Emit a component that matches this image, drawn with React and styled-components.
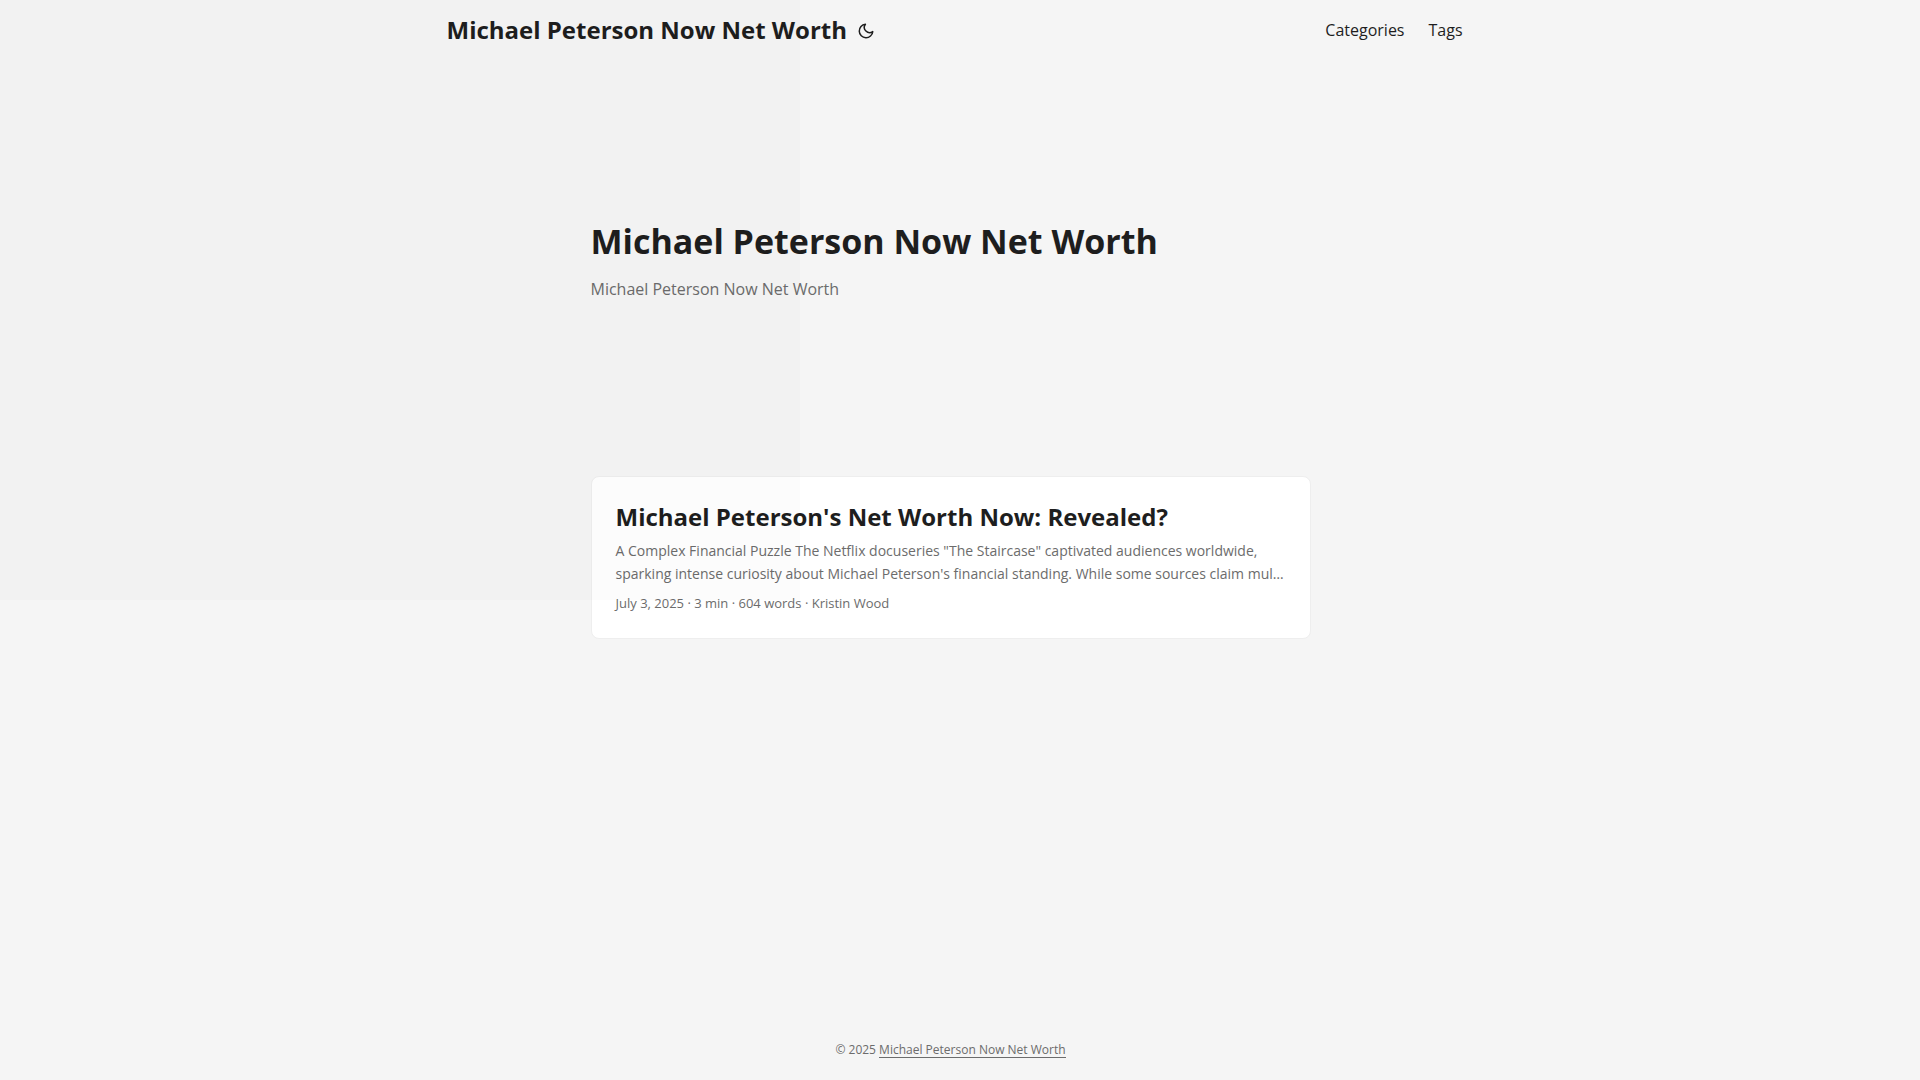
import React from 'react'
import styled, { createGlobalStyle } from 'styled-components'
import { FiMoon } from 'react-icons/fi'

const siteTitle = 'Michael Peterson Now Net Worth'

const menuLinks = [
  { label: 'Categories', url: '#categories' },
  { label: 'Tags', url: '#tags' },
]

const posts = [
  {
    title: "Michael Peterson's Net Worth Now: Revealed?",
    url: '#michael-peterson',
    summary:
      'A Complex Financial Puzzle The Netflix docuseries "The Staircase" captivated audiences worldwide, sparking intense curiosity about Michael Peterson\'s financial standing. While some sources claim mul…',
    meta: 'July 3, 2025 · 3 min · 604 words · Kristin Wood',
  },
]

const GlobalStyle = createGlobalStyle`
  *, *::before, *::after {
    box-sizing: border-box;
  }

  body {
    margin: 0;
    background: #f5f5f5;
    color: #1e1e1e;
    font-family: "Open Sans", "Noto Sans", sans-serif;
    font-size: 16px;
    line-height: 26px;
    text-rendering: optimizeLegibility;
  }

  h1, h2, p {
    margin: 0;
  }

  a {
    color: inherit;
    text-decoration: none;
  }
`

const Page = styled.div`
  display: flex;
  flex-direction: column;
  min-height: 100vh;
  padding-right: 19px;
`

const Shade = styled.div`
  position: absolute;
  top: 0;
  left: 0;
  width: 800px;
  height: 600px;
  background: rgba(0, 0, 0, 0.013);
  pointer-events: none;
`

const Nav = styled.nav`
  display: flex;
  justify-content: space-between;
  width: 100%;
  max-width: 1072px;
  margin: 0 auto;
  padding: 0 24px 0 32px;
  line-height: 60px;
`

const Logo = styled.div`
  display: flex;
  align-items: center;
  height: 60px;
`

const LogoLink = styled.a`
  font-size: 24px;
  font-weight: 700;
`

const ThemeToggle = styled.button`
  display: flex;
  align-items: center;
  height: 60px;
  margin: 0 2px;
  padding: 2px 8px 0;
  border: 0;
  background: none;
  color: inherit;
  cursor: pointer;
`

const Menu = styled.ul`
  display: flex;
  gap: 24px;
  margin: 0;
  padding: 0;
  list-style: none;
`

const Main = styled.main`
  flex: 1;
  width: 100%;
  max-width: 768px;
  margin: 0 auto;
  padding: 24px;
`

const Intro = styled.article`
  display: flex;
  flex-direction: column;
  justify-content: center;
  min-height: 320px;
  margin: 24px 0 48px;
`

const IntroTitle = styled.h1`
  font-size: 34px;
  line-height: 44px;
`

const IntroText = styled.p`
  margin: 13px 0 15px;
  color: #6c6c6c;
`

const Card = styled.article`
  padding: 24px;
  border: 1px solid #eee;
  border-radius: 8px;
  background: #fff;
`

const CardTitle = styled.h2`
  font-size: 24px;
  line-height: 32px;
`

const CardText = styled.p`
  margin: 6px 0 8px;
  color: #6c6c6c;
  font-size: 14px;
  line-height: 23px;
`

const CardMeta = styled.footer`
  color: #6c6c6c;
  font-size: 13px;
  line-height: 21px;
`

const Footer = styled.footer`
  height: 60px;
  padding: 18px 24px;
  color: #6c6c6c;
  font-size: 12px;
  line-height: 24px;
  text-align: center;
`

const FooterLink = styled.a`
  display: inline-block;
  border-bottom: 1px solid #6c6c6c;
  line-height: 15px;
`

const App = () => (
  <>
    <GlobalStyle />
    <Page>
      <header>
        <Nav>
          <Logo>
            <LogoLink href="#home">{siteTitle}</LogoLink>
            <ThemeToggle type="button" aria-label="Toggle theme">
              <FiMoon size={18} />
            </ThemeToggle>
          </Logo>
          <Menu>
            {menuLinks.map(({ label, url }) => (
              <li key={label}>
                <a href={url}>{label}</a>
              </li>
            ))}
          </Menu>
        </Nav>
      </header>
      <Main>
        <Intro>
          <IntroTitle>{siteTitle}</IntroTitle>
          <IntroText>{siteTitle}</IntroText>
        </Intro>
        {posts.map(post => (
          <Card key={post.url}>
            <CardTitle>
              <a href={post.url}>{post.title}</a>
            </CardTitle>
            <CardText>{post.summary}</CardText>
            <CardMeta>{post.meta}</CardMeta>
          </Card>
        ))}
      </Main>
      <Footer>
        © 2025 <FooterLink href="#home">{siteTitle}</FooterLink>
      </Footer>
    </Page>
    <Shade />
  </>
)

export default App
